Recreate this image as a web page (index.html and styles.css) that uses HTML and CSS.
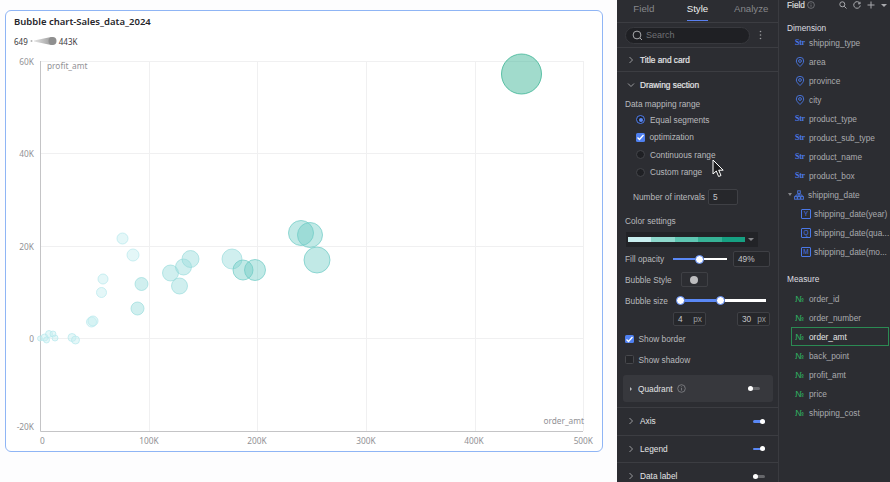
FILE: index.html
```html
<!DOCTYPE html>
<html lang="en">
<head>
<meta charset="utf-8">
<title>Bubble chart</title>
<link rel="stylesheet" href="styles.css">
</head>
<body>
<div class="app">
  <main class="canvas">
    <section class="card">
      <h1 class="card-title">Bubble chart-Sales_data_2024</h1>
      <div class="legend">
        <span>649</span>
        <svg class="legend-ramp" width="27" height="10" viewBox="0 0 27 10"><defs><linearGradient id="ramp"><stop offset="0" stop-color="#e4e4e4"/><stop offset="1" stop-color="#8f8f8f"/></linearGradient></defs><circle cx="1.500" cy="5" r="1" fill="#b5b5b5"/><path d="M4 4.400 L21 1 A4 4 0 0 1 21 9 L4 5.600 Z" fill="url(#ramp)"/><circle cx="22.500" cy="5" r="4" fill="#8f8f8f"/></svg>
        <span>443K</span>
      </div>
      <svg class="chart" width="598" height="420" viewBox="5 32 598 420">
        <g class="grid">
          <path d="M40 61.500H583.500M40 153.500H583.500M40 246.500H583.500M40 338.500H583.500"/>
          <path d="M149.500 61V431M257.500 61V431M366.500 61V431M475.500 61V431M583.500 61V431"/>
        </g>
        <path class="axis" d="M40.500 61V431.500H583"/>
        <g class="tick">
          <text x="34" y="64.500" text-anchor="end">60K</text>
          <text x="34" y="157" text-anchor="end">40K</text>
          <text x="34" y="249.500" text-anchor="end">20K</text>
          <text x="34" y="341.500" text-anchor="end">0</text>
          <text x="34" y="430" text-anchor="end">-20K</text>
          <text x="40" y="444">0</text>
          <text x="149" y="444" text-anchor="middle">100K</text>
          <text x="257" y="444" text-anchor="middle">200K</text>
          <text x="366" y="444" text-anchor="middle">300K</text>
          <text x="474" y="444" text-anchor="middle">400K</text>
          <text x="593" y="444" text-anchor="end">500K</text>
          <text x="47" y="68.500">profit_amt</text>
          <text x="584" y="423.500" text-anchor="end">order_amt</text>
        </g>
        <g class="b1">
          <circle cx="40" cy="338.500" r="2.500"/><circle cx="44.500" cy="337.500" r="3.500"/><circle cx="46.500" cy="340" r="3"/><circle cx="49" cy="334" r="3.500"/><circle cx="53" cy="334" r="3"/><circle cx="55" cy="338" r="3"/><circle cx="72" cy="337.500" r="4"/><circle cx="75.500" cy="340" r="4"/><circle cx="91.500" cy="322" r="5"/><circle cx="93" cy="321" r="5"/><circle cx="101.500" cy="292.500" r="5"/><circle cx="103" cy="279" r="5"/><circle cx="122.500" cy="238.500" r="5.500"/><circle cx="133" cy="255" r="6"/>
        </g>
        <g class="b2">
          <circle cx="137.500" cy="308.500" r="6.500"/><circle cx="141.500" cy="284" r="6.500"/><circle cx="170.500" cy="273" r="8"/><circle cx="179.500" cy="286" r="8"/><circle cx="183.500" cy="267" r="8"/><circle cx="190.500" cy="259" r="8.500"/>
        </g>
        <g class="b3">
          <circle cx="232" cy="259" r="10"/>
        </g>
        <g class="b4">
          <circle cx="243" cy="270" r="10"/><circle cx="255" cy="270" r="10.500"/><circle cx="301" cy="233" r="12.500"/><circle cx="310" cy="235" r="12.500"/><circle cx="317" cy="260" r="13"/>
        </g>
        <g class="b5"><circle cx="521.500" cy="74" r="20"/></g>
      </svg>
    </section>
  </main>

  <aside class="style-panel">
    <nav class="tabs">
      <span class="tab"><span>Field</span></span>
      <span class="tab tab-on"><span>Style</span></span>
      <span class="tab"><span>Analyze</span></span>
    </nav>
    <div class="search-row">
      <div class="search">
        <svg width="11" height="11" viewBox="0 0 11 11"><circle cx="5" cy="5" r="3.900"/><path d="M8 8l2 2"/></svg>
        <span>Search</span>
      </div>
      <svg class="kebab" width="3" height="10" viewBox="0 0 3 10"><circle cx="1.500" cy="1.500" r=".8"/><circle cx="1.500" cy="5" r=".8"/><circle cx="1.500" cy="8.500" r=".8"/></svg>
    </div>
    <div class="sec-head sec-line">
      <svg class="chev" width="6" height="8" viewBox="0 0 6 8"><path d="M1.500 1l3 3-3 3"/></svg>
      <span>Title and card</span>
    </div>
    <div class="sec-head sec-open">
      <svg class="chev" width="8" height="6" viewBox="0 0 8 6"><path d="M1 1.500l3 3 3-3"/></svg>
      <span>Drawing section</span>
    </div>
    <div class="body">
      <div class="label-row">Data mapping range</div>
      <div class="opt"><i class="radio radio-on"></i><span>Equal segments</span></div>
      <div class="opt"><i class="check check-on"><svg width="9" height="9" viewBox="0 0 9 9"><path d="M1.500 4.500l2 2 4-4.500"/></svg></i><span>optimization</span></div>
      <div class="opt"><i class="radio"></i><span>Continuous range</span></div>
      <div class="opt"><i class="radio"></i><span>Custom range</span></div>
      <div class="intervals"><span>Number of intervals</span><span class="input input-n">5</span></div>
      <div class="label-row color-label">Color settings</div>
      <div class="color-select">
        <span class="ramp"><i class="c1"></i><i class="c2"></i><i class="c3"></i><i class="c4"></i><i class="c5"></i></span>
        <i class="caret"></i>
      </div>
      <div class="ctl fill-row">
        <span class="ctl-label">Fill opacity</span>
        <span class="slider slider-fill"><i class="tr-on s-a"></i><i class="thumb"></i><i class="tr-off"></i></span>
        <span class="input input-pct">49%</span>
      </div>
      <div class="ctl style-row">
        <span>Bubble Style</span>
        <span class="swatch"><i></i></span>
      </div>
      <div class="ctl size-row">
        <span>Bubble size</span>
        <span class="slider slider-size"><i class="thumb"></i><i class="tr-on s-b"></i><i class="thumb"></i><i class="tr-off"></i></span>
      </div>
      <div class="size-inputs">
        <span class="input input-px"><span>4</span><em>px</em></span>
        <span class="input input-px"><span>30</span><em>px</em></span>
      </div>
      <div class="flag flag-first"><i class="check check-on"><svg width="9" height="9" viewBox="0 0 9 9"><path d="M1.500 4.500l2 2 4-4.500"/></svg></i><span>Show border</span></div>
      <div class="flag"><i class="check"></i><span>Show shadow</span></div>
      <div class="quadrant">
        <i class="tri"></i><span class="q-name">Quadrant</span>
        <svg class="info" width="9" height="9" viewBox="0 0 9 9"><circle cx="4.500" cy="4.500" r="3.800"/><path d="M4.500 4v2.500M4.500 2.400v.8"/></svg>
        <span class="toggle toggle-q"><i></i></span>
      </div>
    </div>
    <div class="collapsed coll-first">
      <svg class="chev" width="6" height="8" viewBox="0 0 6 8"><path d="M1.500 1l3 3-3 3"/></svg>
      <span>Axis</span><span class="toggle toggle-on"><i></i></span>
    </div>
    <div class="collapsed">
      <svg class="chev" width="6" height="8" viewBox="0 0 6 8"><path d="M1.500 1l3 3-3 3"/></svg>
      <span>Legend</span><span class="toggle toggle-on"><i></i></span>
    </div>
    <div class="collapsed">
      <svg class="chev" width="6" height="8" viewBox="0 0 6 8"><path d="M1.500 1l3 3-3 3"/></svg>
      <span>Data label</span><span class="toggle"><i></i></span>
    </div>
  </aside>

  <aside class="field-panel">
    <header class="field-head">
      <span class="fh-title">Field</span>
      <svg class="info" width="8" height="8" viewBox="0 0 9 9"><circle cx="4.500" cy="4.500" r="3.800"/><path d="M4.500 4v2.500M4.500 2.400v.8"/></svg>
      <span class="fh-tools">
        <svg width="8" height="8" viewBox="0 0 8 8"><circle cx="3.300" cy="3.300" r="2.500"/><path d="M5.200 5.200L7.500 7.500"/></svg>
        <svg width="8" height="8" viewBox="0 0 8 8"><path d="M7 2.500A3.300 3.300 0 1 0 7.300 4.500M7 .8v2H5"/></svg>
        <svg width="8" height="8" viewBox="0 0 8 8"><path d="M4 .5v7M.5 4h7"/></svg>
        <i class="fh-caret"></i>
      </span>
    </header>
    <div class="group">Dimension</div>
    <div class="row"><b class="t-str">Str</b><span>shipping_type</span></div>
    <div class="row"><svg class="pin" width="10" height="10" viewBox="0 0 10 10"><path d="M5 9.500C3 7.500 1.300 5.900 1.300 4a3.700 3.700 0 0 1 7.400 0C8.700 5.900 7 7.500 5 9.500Z"/><circle cx="5" cy="4" r="1.400"/></svg><span>area</span></div>
    <div class="row"><svg class="pin" width="10" height="10" viewBox="0 0 10 10"><path d="M5 9.500C3 7.500 1.300 5.900 1.300 4a3.700 3.700 0 0 1 7.400 0C8.700 5.900 7 7.500 5 9.500Z"/><circle cx="5" cy="4" r="1.400"/></svg><span>province</span></div>
    <div class="row"><svg class="pin" width="10" height="10" viewBox="0 0 10 10"><path d="M5 9.500C3 7.500 1.300 5.900 1.300 4a3.700 3.700 0 0 1 7.400 0C8.700 5.900 7 7.500 5 9.500Z"/><circle cx="5" cy="4" r="1.400"/></svg><span>city</span></div>
    <div class="row"><b class="t-str">Str</b><span>product_type</span></div>
    <div class="row"><b class="t-str">Str</b><span>product_sub_type</span></div>
    <div class="row"><b class="t-str">Str</b><span>product_name</span></div>
    <div class="row"><b class="t-str">Str</b><span>product_box</span></div>
    <div class="row row-tree"><i class="tree-caret"></i><svg class="pin" width="10" height="10" viewBox="0 0 10 10"><rect x="3.700" y=".8" width="2.600" height="2.600"/><rect x=".6" y="6.600" width="2.600" height="2.600"/><rect x="3.700" y="6.600" width="2.600" height="2.600"/><rect x="6.800" y="6.600" width="2.600" height="2.600"/><path d="M5 3.400v3.200M1.900 6.600V5h6.200v1.600"/></svg><span>shipping_date</span></div>
    <div class="row row-child"><b class="t-date">Y</b><span>shipping_date(year)</span></div>
    <div class="row row-child"><b class="t-date">Q</b><span>shipping_date(qua...</span></div>
    <div class="row row-child"><b class="t-date">M</b><span>shipping_date(mo...</span></div>
    <div class="group group-m">Measure</div>
    <div class="row"><b class="t-num">№</b><span>order_id</span></div>
    <div class="row"><b class="t-num">№</b><span>order_number</span></div>
    <div class="row row-sel"><b class="t-num">№</b><span>order_amt</span></div>
    <div class="row"><b class="t-num">№</b><span>back_point</span></div>
    <div class="row"><b class="t-num">№</b><span>profit_amt</span></div>
    <div class="row"><b class="t-num">№</b><span>price</span></div>
    <div class="row"><b class="t-num">№</b><span>shipping_cost</span></div>
  </aside>
</div>
<svg class="cursor" width="13" height="19" viewBox="0 0 13 19"><path d="M1 1v14l3.300-3 2.300 5.500 2.400-1-2.300-5.300h4.500Z"/></svg>
</body>
</html>
```
FILE: styles.css
```css
* { box-sizing: border-box; }
html, body { margin: 0; padding: 0; width: 890px; height: 482px; overflow: hidden; background: #fff; }
body { font-family: "Liberation Sans", Arial, sans-serif; font-size: 8.300px; position: relative; }
i, em, b { display: block; font-style: normal; font-weight: normal; }
.app { display: flex; height: 482px; }

/* canvas */
.canvas { width: 617px; flex: none; padding: 10px 14px 0 5px; background: #fdfdfe; font-family: "Noto Sans", sans-serif; }
.card { width: 598px; height: 442px; background: #fff; border: 1px solid #8fb5f5; border-radius: 6px; position: relative; overflow: hidden; }
.card-title { margin: 4px 0 0 8px; font-size: 9.500px; line-height: 14px; font-weight: 600; color: #26262b; }
.legend { display: flex; align-items: center; gap: 2px; margin: 6px 0 0 8px; height: 12px; font-size: 8px; color: #3a3a3e; }
.chart { display: block; position: absolute; left: -1px; top: 21px; }
.chart text { font-family: "Noto Sans", sans-serif; }
.grid path { stroke: #f0f0f1; stroke-width: 1; fill: none; }
.axis { stroke: #c4c4c6; stroke-width: 1; fill: none; }
.tick text { font-size: 8.300px; fill: #929296; }
.b1 circle { fill: #c8eef1; fill-opacity: .49; stroke: #b6e8ec; stroke-opacity: .7; }
.b2 circle { fill: #9fdfdf; fill-opacity: .49; stroke: #90d8d8; stroke-opacity: .6; }
.b3 circle { fill: #9fdfdf; fill-opacity: .49; stroke: #90d8d8; stroke-opacity: .6; }
.b4 circle { fill: #6ccbc4; fill-opacity: .42; stroke: #6ccbc4; stroke-opacity: .7; }
.b5 circle { fill: #3fb596; fill-opacity: .49; stroke: #3fb596; stroke-opacity: .8; }

/* style panel */
.style-panel { width: 162px; flex: none; background: #2c2d32; color: #b9babd; border-right: 1px solid #3a3b40; }
.tabs { display: grid; grid-template-columns: repeat(3, 1fr); height: 23px; border-bottom: 1px solid #3c3d42; font-size: 9.700px; }
.tab { display: flex; justify-content: center; color: #86878b; }
.tab span { display: block; height: 21px; line-height: 17px; }
.tab-on { color: #eceded; }
.tab-on span { border-bottom: 1px solid #5a80f0; }
.search-row { display: flex; align-items: center; height: 25px; padding: 0 0 0 8px; border-bottom: 1px solid #3c3d42; }
.search { display: flex; align-items: center; gap: 3px; width: 125px; height: 17px; border-radius: 9px; background: #1f2024; border: 1px solid #37383d; padding-left: 6px; color: #6f7074; font-size: 9px; }
.search svg { fill: none; stroke: #a8a9ac; }
.kebab { margin-left: 9px; fill: #9a9b9e; }
.sec-head { display: flex; align-items: center; gap: 6px; padding-left: 11px; color: #e4e5e7; -webkit-text-stroke: .2px #e4e5e7; }
.sec-line { height: 24px; border-bottom: 1px solid #3c3d42; }
.sec-open { height: 25px; padding-left: 10px; gap: 5px; }
.chev { fill: none; stroke: #9a9b9e; flex: none; }
.body { padding: 0 0 0 8px; }
.label-row { height: 14px; line-height: 14px; }
.opt { display: flex; align-items: center; height: 17.500px; padding-left: 11px; gap: 5px; }
.radio { width: 9px; height: 9px; border-radius: 50%; background: #1f2024; border: 1px solid #44454a; flex: none; }
.radio-on { border-color: #4f7df0; position: relative; }
.radio-on::after { content: ""; display: block; margin: 1.500px; width: 4px; height: 4px; border-radius: 50%; background: #5a88f5; }
.check { width: 8.500px; height: 8.500px; border-radius: 1.500px; background: #25262a; border: 1px solid #47484c; flex: none; }
.check-on { background: #4f80f0; border: 0; }
.check svg { display: block; fill: none; stroke: #fff; stroke-width: 1.300; }
.intervals { display: flex; align-items: center; gap: 3px; height: 16px; margin-top: 8px; padding-left: 8px; }
.input { height: 16px; background: #26272b; border: 1px solid #3f4045; border-radius: 2px; color: #c4c5c8; line-height: 14px; padding-left: 4px; display: block; }
.input-n { width: 30px; }
.color-label { margin-top: 9px; height: 14px; line-height: 14px; }
.color-select { display: flex; align-items: center; width: 132px; height: 15px; margin: 4px 0 0 1px; background: #222327; padding-left: 2px; }
.ramp { display: flex; width: 117px; height: 4.500px; }
.ramp i { flex: 1; }
.c1 { background: #c9eef0; } .c2 { background: #8ed8cc; } .c3 { background: #5fc6b2; } .c4 { background: #37b296; } .c5 { background: #16a082; }
.caret { margin-left: 3px; border: 3px solid transparent; border-top: 3.500px solid #85868a; border-bottom: 0; }
.ctl { display: flex; align-items: center; height: 16px; }
.fill-row { margin-top: 4px; }
.ctl-label { width: 48px; }
.slider { display: flex; align-items: center; }
.slider i.tr-on { height: 2.500px; background: #5a88f5; }
.slider i.tr-off { height: 2.500px; background: #fff; flex: 1; }
.thumb { width: 9px; height: 9px; border-radius: 50%; background: #fff; border: 1.500px solid #5a88f5; flex: none; }
.slider-fill { width: 54px; }
.s-a { width: 22px; }
.input-pct { width: 37px; margin-left: 6px; }
.style-row { margin-top: 5px; height: 15px; gap: 9px; }
.swatch { display: flex; align-items: center; justify-content: center; width: 27px; height: 15px; border: 1px solid #3f4045; border-radius: 2px; }
.swatch i { width: 8px; height: 8px; border-radius: 50%; background: #bdbdbf; }
.size-row { margin-top: 6px; height: 15px; }
.slider-size { width: 90px; margin-left: 8px; }
.s-b { width: 31px; }
.size-inputs { display: flex; margin: 4px 0 0 48px; gap: 31px; }
.input-px { display: flex; justify-content: space-between; width: 33px; height: 14px; line-height: 12px; padding: 0 3px 0 4px; }
.input-px em { color: #9a9b9e; }
.flag { display: flex; align-items: center; gap: 5px; height: 16px; margin-top: 4.500px; }
.flag-first { margin-top: 5px; }
.quadrant { display: flex; align-items: center; width: 150px; height: 27px; margin: 7.500px 0 0 -2px; background: #37383d; border-radius: 3px; padding-left: 7px; color: #e0e1e3; }
.tri { border: 2px solid transparent; border-left: 2.500px solid #b9babd; border-right: 0; margin-right: 6px; }
.q-name { margin-right: 4px; }
.info { fill: none; stroke: #85868a; stroke-width: .8; flex: none; }
.toggle { display: flex; align-items: center; width: 12px; height: 2.500px; background: #66676b; border-radius: 2px; margin-left: auto; }
.toggle i { width: 5px; height: 5px; border-radius: 50%; background: #fff; flex: none; }
.toggle-on { background: #5a88f5; justify-content: flex-end; }
.toggle-q { margin-right: 13px; }
.collapsed { display: flex; align-items: center; gap: 6px; height: 27.500px; padding: 0 13px 0 11px; border-bottom: 1px solid #3c3d42; color: #e4e5e7; }
.coll-first { margin-top: 5px; border-top: 1px solid #3c3d42; height: 28.500px; }

/* field panel */
.field-panel { flex: 1; background: #2c2d32; color: #a9aaae; }
.field-head { display: flex; align-items: center; gap: 2px; height: 12px; padding-left: 8px; margin-bottom: 10px; margin-top: -1px; color: #dcdddf; }
.fh-title { -webkit-text-stroke: .2px #dcdddf; }
.fh-tools { display: flex; align-items: center; gap: 6px; margin-left: auto; padding-right: 3px; }
.fh-tools svg { fill: none; stroke: #a9aaae; }
.fh-caret { border: 3px solid transparent; border-top: 3px solid #a9aaae; border-bottom: 0; }
.group { height: 12px; line-height: 14px; padding-left: 8px; color: #dcdde0; }
.group-m { margin-top: 11px; margin-bottom: 5px; }
.row { display: flex; align-items: center; height: 19px; padding-left: 16px; white-space: nowrap; }
.row > span { margin-left: 4px; }
.t-str { width: 10px; color: #4a78e8; font-size: 8px; font-weight: 700; letter-spacing: -.3px; font-family: "Liberation Serif", serif; }
.t-num { width: 10px; color: #2fa85e; font-size: 8.500px; font-family: "DejaVu Sans", sans-serif; letter-spacing: -.8px; }
.t-date { width: 10px; height: 10px; border: 1px solid #4a78e8; color: #4a78e8; font-size: 6.500px; line-height: 8px; text-align: center; border-radius: 1px; }
.pin { fill: none; stroke: #4a78e8; flex: none; stroke-width: .9; }
.row-tree { padding-left: 9px; }
.tree-caret { border: 2.500px solid transparent; border-top: 3px solid #85868a; border-bottom: 0; margin-right: 2px; }
.row-child { padding-left: 22px; }
.row-child > span { margin-left: 3px; }
.row-sel { margin: 0 1px 0 12px; padding-left: 3px; border: 1px solid #2b8a53; color: #e4e5e6; }
.cursor { position: absolute; left: 712px; top: 159px; fill: #1c1c1e; stroke: #fff; stroke-width: 1; }
```
